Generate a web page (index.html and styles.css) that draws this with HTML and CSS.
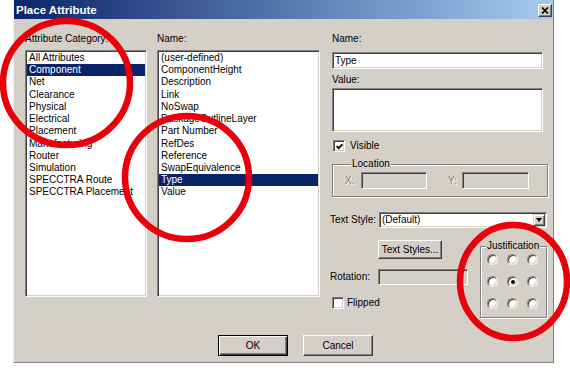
FILE: index.html
```html
<!DOCTYPE html>
<html lang="en">
<head>
    <meta charset="utf-8">
    <title>Place Attribute</title>
    <link rel="stylesheet" href="styles.css">
</head>
<body>
    <div class="dialog">
        <!-- Title Bar -->
        <div class="titlebar">
            <span class="title">Place Attribute</span>
            <span class="close-btn">
                <svg width="8" height="7" viewBox="0 0 8 7"><path d="M1 0.5l6 6M7 0.5l-6 6" stroke="#000" stroke-width="1.7" fill="none"/></svg>
            </span>
        </div>

        <div class="dialog-body">
            <!-- Attribute Category -->
            <div class="col-category">
                <div class="label">Attribute Category:</div>
                <ul class="listbox">
                    <li>All Attributes</li>
                    <li class="selected">Component</li>
                    <li>Net</li>
                    <li>Clearance</li>
                    <li>Physical</li>
                    <li>Electrical</li>
                    <li>Placement</li>
                    <li>Manufacturing</li>
                    <li>Router</li>
                    <li>Simulation</li>
                    <li>SPECCTRA Route</li>
                    <li>SPECCTRA Placement</li>
                </ul>
            </div>

            <!-- Attribute Name -->
            <div class="col-name">
                <div class="label">Name:</div>
                <ul class="listbox">
                    <li>(user-defined)</li>
                    <li>ComponentHeight</li>
                    <li>Description</li>
                    <li>Link</li>
                    <li>NoSwap</li>
                    <li>PackageOutlineLayer</li>
                    <li>Part Number</li>
                    <li>RefDes</li>
                    <li>Reference</li>
                    <li>SwapEquivalence</li>
                    <li class="selected">Type</li>
                    <li>Value</li>
                </ul>
            </div>

            <!-- Properties -->
            <div class="col-props">
                <div class="label indent">Name:</div>
                <div class="field name-field">Type</div>
                <div class="label indent value-label">Value:</div>
                <div class="field value-field"></div>

                <div class="check-row visible-row">
                    <span class="checkbox">
                        <svg width="7" height="7" viewBox="0 0 7 7"><path d="M0.6 3.2l2 2 3.8-3.9" stroke="#000" stroke-width="1.7" fill="none"/></svg>
                    </span>
                    <span class="check-text">Visible</span>
                </div>

                <div class="groupbox location-group">
                    <div class="group-title">Location</div>
                    <div class="location-row">
                        <span class="disabled-text">X:</span>
                        <div class="field field-disabled x-field"></div>
                        <span class="disabled-text y-label">Y:</span>
                        <div class="field field-disabled y-field"></div>
                    </div>
                </div>

                <div class="style-row">
                    <span class="style-label">Text Style:</span>
                    <div class="combo">
                        <span class="combo-text">(Default)</span>
                        <span class="combo-btn"><span class="arrow"></span></span>
                    </div>
                </div>

                <div class="lower">
                    <div class="lower-left">
                        <button class="btn styles-btn">Text Styles...</button>
                        <div class="rotation-row">
                            <span class="rotation-label">Rotation:</span>
                            <div class="field field-disabled rotation-field"></div>
                        </div>
                        <div class="check-row flipped-row">
                            <span class="checkbox"></span>
                            <span class="check-text">Flipped</span>
                        </div>
                    </div>

                    <div class="groupbox justify-group">
                        <div class="group-title">Justification</div>
                        <div class="radio-grid">
                            <span class="radio"></span>
                            <span class="radio"></span>
                            <span class="radio"></span>
                            <span class="radio"></span>
                            <span class="radio checked"></span>
                            <span class="radio"></span>
                            <span class="radio"></span>
                            <span class="radio"></span>
                            <span class="radio"></span>
                        </div>
                    </div>
                </div>
            </div>
        </div>

        <div class="button-row">
            <button class="btn btn-default">OK</button>
            <button class="btn">Cancel</button>
        </div>
    </div>

    <!-- Red markup circles drawn over the screenshot -->
    <svg class="annotations" width="570" height="368" viewBox="0 0 570 368">
        <ellipse cx="66.5" cy="83" rx="63.5" ry="62"/>
        <ellipse cx="187" cy="177.5" rx="62" ry="61.5"/>
        <ellipse cx="513.5" cy="281.5" rx="53.5" ry="56.5"/>
    </svg>
</body>
</html>
```

FILE: styles.css
```css
/* General Styles */
body {
    margin: 0;
    background-color: #ffffff;
    font-family: "Liberation Sans", Arial, sans-serif;
    font-size: 10px;
    line-height: 12px;
    color: #000000;
    overflow: hidden;
}

.dialog {
    width: 541px;
    height: 363px;
    margin-left: 13px;
    box-sizing: border-box;
    background-color: #d4d0c8;
    border-left: 1px solid #f4f2ee;
    border-right: 1px solid #808080;
    border-bottom: 1px solid #808080;
}

/* Title Bar */
.titlebar {
    height: 19px;
    box-sizing: border-box;
    padding: 1px 1px 0 2px;
    display: flex;
    align-items: center;
    justify-content: space-between;
    background: linear-gradient(to right, #0a246a, #a6caf0);
}

.title {
    color: #ffffff;
    font-weight: bold;
    font-size: 11.5px;
}

.close-btn {
    width: 14px;
    height: 13px;
    box-sizing: border-box;
    display: flex;
    align-items: center;
    justify-content: center;
    background-color: #d4d0c8;
    border: 1px solid;
    border-color: #ffffff #404040 #404040 #ffffff;
    box-shadow: inset -1px -1px 0 #808080;
}

/* Layout */
.dialog-body {
    display: flex;
    padding: 14px 0 0 11px;
}

.col-category {
    width: 122px;
}

.col-name {
    width: 163px;
    margin-left: 10px;
}

.col-props {
    width: 218px;
    margin-left: 10px;
    display: flex;
    flex-direction: column;
}

.label {
    height: 12px;
    white-space: nowrap;
}

.indent {
    padding-left: 2px;
}

/* Sunken controls */
.listbox,
.field,
.combo,
.checkbox {
    box-sizing: border-box;
    background-color: #ffffff;
    border: 1px solid;
    border-color: #808080 #ffffff #ffffff #808080;
    box-shadow: inset 1px 1px 0 #404040, inset -1px -1px 0 #d4d0c8;
}

.listbox {
    margin: 5px 0 0;
    padding: 1px;
    list-style: none;
    height: 247px;
    overflow: hidden;
}

.listbox li {
    height: 12.22px;
    line-height: 12.22px;
    padding-left: 2px;
    white-space: nowrap;
}

.listbox li.selected {
    background-color: #0a246a;
    color: #ffffff;
}

.field {
    display: flex;
    align-items: center;
    padding-left: 2px;
}

.field-disabled {
    background-color: #d4d0c8;
}

.name-field {
    margin: 7px 0 0 2px;
    width: 211px;
    height: 17px;
}

.value-label {
    margin-top: 5px;
}

.value-field {
    margin: 2px 0 0 2px;
    width: 211px;
    height: 44px;
}

/* Check boxes */
.check-row {
    display: flex;
    align-items: center;
    height: 12px;
}

.checkbox {
    width: 12px;
    height: 12px;
    display: flex;
    align-items: center;
    justify-content: center;
}

.visible-row {
    margin-top: 8px;
}

.visible-row .checkbox {
    margin-left: 3px;
}

.visible-row .check-text {
    margin-left: 5px;
}

.flipped-row {
    margin: 12px 0 0 2px;
}

.flipped-row .check-text {
    margin-left: 3px;
}

/* Group boxes */
.groupbox {
    box-sizing: border-box;
    border: 1px solid #808080;
    box-shadow: inset 1px 1px 0 #ffffff, 1px 1px 0 #ffffff;
}

.group-title {
    width: max-content;
    margin: -7px 0 0 6px;
    padding: 0 1px;
    height: 12px;
    background-color: #d4d0c8;
}

.location-group {
    margin: 12px 0 0 2px;
    width: 216px;
    padding: 0 0 7px 12px;
}

.location-row {
    display: flex;
    align-items: center;
    margin-top: 2px;
}

.disabled-text {
    color: #808080;
    text-shadow: 1px 1px 0 #ffffff;
}

.x-field {
    margin-left: 6.5px;
    width: 66px;
    height: 17px;
}

.y-label {
    margin-left: 21px;
}

.y-field {
    margin-left: 5.5px;
    width: 67px;
    height: 17px;
}

/* Text style combo */
.style-row {
    display: flex;
    align-items: center;
    margin-top: 15px;
}

.style-label {
    width: 49px;
    white-space: nowrap;
}

.combo {
    width: 168px;
    height: 16px;
    padding: 1px 1px 1px 2px;
    display: flex;
    align-items: center;
    justify-content: space-between;
}

.combo-btn {
    width: 12px;
    height: 12px;
    box-sizing: border-box;
    display: flex;
    align-items: center;
    justify-content: center;
    background-color: #d4d0c8;
    border: 1px solid;
    border-color: #d4d0c8 #404040 #404040 #d4d0c8;
    box-shadow: inset 1px 1px 0 #ffffff, inset -1px -1px 0 #808080;
}

.arrow {
    width: 0;
    height: 0;
    border-left: 3.5px solid transparent;
    border-right: 3.5px solid transparent;
    border-top: 4px solid #000000;
}

/* Lower area */
.lower {
    display: flex;
}

.lower-left {
    width: 150px;
    display: flex;
    flex-direction: column;
    align-items: flex-start;
}

.btn {
    box-sizing: border-box;
    margin: 0;
    padding: 0;
    font: inherit;
    color: #000000;
    background-color: #d4d0c8;
    border: 1px solid;
    border-color: #ffffff #404040 #404040 #ffffff;
    box-shadow: inset -1px -1px 0 #808080;
}

.styles-btn {
    margin: 12px 0 0 48px;
    width: 64px;
    height: 19px;
}

.rotation-row {
    display: flex;
    align-items: center;
    margin-top: 10px;
}

.rotation-label {
    width: 48px;
}

.rotation-field {
    width: 90px;
    height: 16px;
}

.justify-group {
    margin-top: 18px;
    width: 67px;
    height: 72px;
}

.group-title {
    line-height: 12px;
}

.justify-group .group-title {
    margin-left: 5px;
}

.radio-grid {
    display: grid;
    grid-template-columns: repeat(3, 11px);
    grid-auto-rows: 11px;
    column-gap: 9px;
    row-gap: 11px;
    margin: 2px 0 0 6px;
}

.radio {
    box-sizing: border-box;
    width: 11px;
    height: 11px;
    border-radius: 50%;
    background-color: #ffffff;
    border: 1px solid;
    border-color: #808080 #f4f2ee #f4f2ee #808080;
    box-shadow: inset 1px 1px 0 #404040, inset -1px -1px 0 #d4d0c8;
    display: flex;
    align-items: center;
    justify-content: center;
}

.radio.checked::after {
    content: "";
    width: 4px;
    height: 4px;
    border-radius: 50%;
    background-color: #000000;
}

/* Bottom buttons */
.button-row {
    display: flex;
    gap: 15px;
    margin: 17px 0 0 204px;
}

.button-row .btn {
    width: 70px;
    height: 21px;
}

.btn-default {
    border: 1px solid #000000;
    box-shadow: inset 1px 1px 0 #ffffff, inset -1px -1px 0 #404040, inset -2px -2px 0 #808080;
}

/* Markup */
.annotations {
    position: absolute;
    top: 0;
    left: 0;
    pointer-events: none;
}

.annotations ellipse {
    fill: none;
    stroke: #e8000b;
    stroke-width: 6.5;
}
```
